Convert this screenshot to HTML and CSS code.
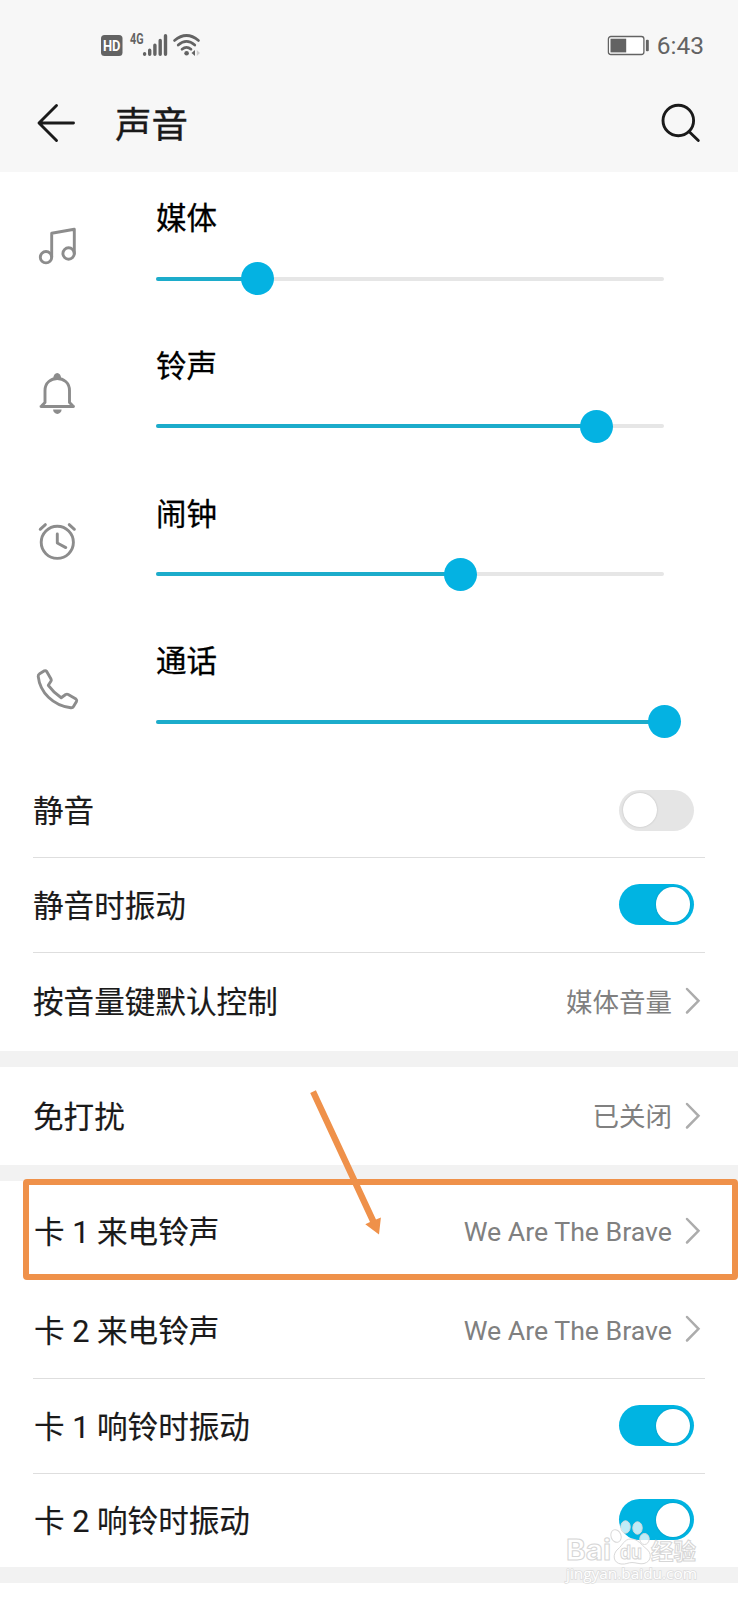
FILE: index.html
```html
<!DOCTYPE html>
<html lang="zh-CN">
<head>
<meta charset="utf-8">
<title>声音</title>
<link rel="stylesheet" href="styles.css">
</head>
<body>
<main class="screen">
  <header class="header">
    <div class="status">
      <svg class="status-icons" width="104" height="32" viewBox="0 0 104 32">
        <rect x="1" y="5" width="21.500" height="21" rx="3.500" fill="#636363"/>
        <text class="hd-label" x="3" y="20.500" textLength="17.500" lengthAdjust="spacingAndGlyphs">HD</text>
        <text class="net-label" x="30" y="14" textLength="13.500" lengthAdjust="spacingAndGlyphs">4G</text>
        <g stroke="#636363" stroke-width="3.400" stroke-linecap="round">
          <path d="M44.600 24.300v-.6M49.700 24.300v-4M54.900 24.300v-9M60.200 24.300V10.500M65.500 24.300V5.800"/>
        </g>
        <g fill="none" stroke="#636363" stroke-width="2.700" stroke-linecap="round">
          <path d="M74.500 10.500Q86.500 0.500 98.500 10.500M78.200 15Q86.500 7.800 94.800 15M82 19.200Q86.500 15.500 91 19.200"/>
        </g>
        <circle cx="86.600" cy="23.300" r="2.300" fill="#636363"/>
        <path d="M95 20v6l-3.500-3z" fill="#636363"/>
        <path d="M96.800 20v6l3.200-3z" fill="#ccc"/>
      </svg>
      <div class="status-right">
        <svg width="44" height="22" viewBox="0 0 44 22">
          <rect x="0.400" y="1.500" width="35.500" height="18" rx="2.500" fill="#fff" stroke="#636363" stroke-width="1.300"/>
          <rect x="2.500" y="3.700" width="15.700" height="13.700" fill="#636363"/>
          <rect x="37.900" y="4.700" width="2.900" height="11.500" rx="1" fill="#636363"/>
        </svg>
        <span class="time">6:43</span>
      </div>
    </div>
    <div class="titlebar">
      <svg width="40" height="40" viewBox="0 0 40 40" class="stroke-dark">
        <path d="M36.500 20H2.500M19.500 2.500L2 20l17.500 17.500"/>
      </svg>
      <h1 class="title">声音</h1>
      <svg class="search" width="42" height="42" viewBox="0 0 42 42">
        <g class="stroke-dark"><circle cx="18.300" cy="18.500" r="15.300"/><path d="M29 29.500l9.300 9"/></g>
      </svg>
    </div>
  </header>

  <section class="volumes">
    <div class="volume">
      <svg class="volume-icon" viewBox="0 0 44 44">
        <circle cx="10" cy="31.200" r="5.700"/><circle cx="32.600" cy="27.500" r="5.700"/>
        <path d="M15.700 31V7.200L38.300 3.200V27.500"/>
      </svg>
      <div class="volume-body"><span class="volume-name">媒体</span>
        <div class="track"><div class="fill" style="width:20%"></div></div></div>
    </div>
    <div class="volume">
      <svg class="volume-icon" viewBox="0 3 44 44">
        <path d="M5 35.500H37.500M6 34.500L9 31.500V19.500C9 3.500 33.500 3.500 33.500 19.500V31.500L36.500 34.500"/>
        <path class="solid" d="M17.300 7.300a3.900 5.300 0 0 1 7.800 0zM17.100 38.500h8.500a4.250 4.400 0 0 1-8.500 0z"/>
      </svg>
      <div class="volume-body"><span class="volume-name">铃声</span>
        <div class="track"><div class="fill" style="width:86.700%"></div></div></div>
    </div>
    <div class="volume">
      <svg class="volume-icon" viewBox="0 3 44 44">
        <circle cx="21.300" cy="23.300" r="16.100"/>
        <path d="M21.300 15v9l8.500 4.600M4.200 10.300l5.200-4.700M38.400 10.300l-5.200-4.700"/>
      </svg>
      <div class="volume-body"><span class="volume-name">闹钟</span>
        <div class="track"><div class="fill" style="width:60%"></div></div></div>
    </div>
    <div class="volume">
      <svg class="volume-icon" viewBox="0 1.500 44 44">
        <path d="M3.600 6.300L8.400 3.300Q9.700 2.700 10.700 4L15 11.500Q15.700 12.700 14.900 13.800L12.300 17.800Q17.500 25 25.200 30.200L29.700 27Q31 26.300 32.200 27L40 31.500Q41.200 32.500 40.500 34L37.500 39Q36.700 40.500 34.800 40.300C17 38 4 25 2.200 8.800Q2.100 7.200 3.600 6.300z"/>
      </svg>
      <div class="volume-body"><span class="volume-name">通话</span>
        <div class="track"><div class="fill" style="width:100%"></div></div></div>
    </div>
  </section>

  <section class="group">
    <div class="row"><span class="label">静音</span><span class="switch"></span></div>
    <div class="row row-vibrate"><span class="label">静音时振动</span><span class="switch on"></span></div>
    <div class="row row-link row-short"><span class="label">按音量键默认控制</span><span class="value"><span class="value-text">媒体音量</span><svg class="chevron" viewBox="0 0 16 28"><path d="M2 2l11.500 11.800L2 25.500"/></svg></span></div>
  </section>
  <section class="group">
    <div class="row row-link"><span class="label">免打扰</span><span class="value"><span class="value-text">已关闭</span><svg class="chevron" viewBox="0 0 16 28"><path d="M2 2l11.500 11.800L2 25.500"/></svg></span></div>
  </section>
  <section class="group">
    <div class="row row-link row-sim"><span class="label sim">卡 1 来电铃声</span><span class="value"><span class="value-latin">We Are The Brave</span><svg class="chevron" viewBox="0 0 16 28"><path d="M2 2l11.500 11.800L2 25.500"/></svg></span></div>
    <div class="row row-link"><span class="label sim">卡 2 来电铃声</span><span class="value"><span class="value-latin">We Are The Brave</span><svg class="chevron" viewBox="0 0 16 28"><path d="M2 2l11.500 11.800L2 25.500"/></svg></span></div>
    <div class="row"><span class="label sim">卡 1 响铃时振动</span><span class="switch on"></span></div>
    <div class="row row-last"><span class="label sim">卡 2 响铃时振动</span><span class="switch on"></span></div>
  </section>

  <div class="highlight"></div>
  <svg class="arrow" width="80" height="150" viewBox="0 0 80 150">
    <path d="M5.200 2.900L10.900 .300 71 129.500 75.900 127.500 74 144.500 60.300 134.300 65 132z" fill="#ef914a"/>
  </svg>
  <svg class="watermark" width="140" height="80" viewBox="0 0 140 80">
    <g class="paw">
      <ellipse cx="51" cy="19" rx="5" ry="6.500" transform="rotate(-20 51 19)"/>
      <ellipse cx="60.500" cy="10" rx="4.700" ry="6.200"/>
      <ellipse cx="72.500" cy="11" rx="4.700" ry="6.200"/>
      <ellipse cx="79.500" cy="22" rx="4.700" ry="5.500"/>
      <path d="M66 22c-7 0-8 6-13 10-6 5-5 14 3 15 5 .6 7-1.500 11-1.500s8 2 12 1c8-2 8-11 2-15-5-4-8-9.500-15-9.500z"/>
    </g>
    <text class="wm-text" x="1" y="43" font-size="28" textLength="45" lengthAdjust="spacingAndGlyphs">Bai</text>
    <text class="wm-text" x="55" y="42" font-size="19" textLength="22" lengthAdjust="spacingAndGlyphs">du</text>
    <text class="wm-text wm-cn" x="86" y="42" font-size="22" textLength="45" lengthAdjust="spacingAndGlyphs">经验</text>
    <text class="wm-url" x="1" y="62" textLength="131" lengthAdjust="spacingAndGlyphs">jingyan.baidu.com</text>
  </svg>
</main>
</body>
</html>
```
FILE: styles.css
```css
* { box-sizing: border-box; }
body { margin: 0; background: #fff; font-family: Roboto, "Noto Sans CJK SC", sans-serif; color: #1a1a1a; }
svg { display: block; flex: none; overflow: visible; }
.screen { position: relative; width: 738px; height: 1600px; overflow: hidden; }
.header { height: 172px; background: #f7f7f7; padding-top: 28px; }
.status { display: flex; justify-content: space-between; align-items: center; height: 36px; padding: 0 34px 0 100px; }
.status-right { display: flex; align-items: center; gap: 5px; }
.time { font-size: 24.500px; color: #636363; line-height: 36px; }
.hd-label { font: bold 15px Roboto, sans-serif; fill: #fff; }
.net-label { font: bold 14px Roboto, sans-serif; fill: #636363; }
.titlebar { display: flex; align-items: center; height: 74px; margin-top: 22px; padding: 0 36px 0 37px; }
.title { margin: 0 0 0 38px; padding-top: 5px; font-size: 36.500px; font-weight: 400; line-height: 74px; -webkit-text-stroke: .4px #1a1a1a; }
.search { margin-left: auto; }
.stroke-dark { fill: none; stroke: #1a1a1a; stroke-width: 2.900; stroke-linecap: round; stroke-linejoin: round; }
.volumes { height: 591px; display: grid; grid-template-rows: repeat(4, 147.750px); color: #000; }
.volume { display: flex; padding: 22px 74px 0 36px; }
.volume-icon { width: 44px; height: 44px; margin: 32px 76px 0 0; fill: none; stroke: #8c8c8c; stroke-width: 2.900; stroke-linecap: round; stroke-linejoin: round; }
.volume-icon .solid { fill: #8c8c8c; stroke: none; }
.volume-body { flex: 1; }
.volume-name { display: block; height: 49px; line-height: 48px; padding-top: 1px; font-size: 30.500px; -webkit-text-stroke: .3px #000; }
.track { height: 4px; margin-top: 33.700px; border-radius: 2px; background: #e6e6e6; }
.fill { display: flex; align-items: center; justify-content: flex-end; height: 4px; border-radius: 2px; background: #1caccb; }
.fill::after { content: ""; flex: none; width: 33px; height: 33px; margin-right: -16.500px; border-radius: 50%; background: #04b2e2; }
.group { padding: 0 33px; border-bottom: 16.500px solid #f2f2f2; }
.row { display: flex; align-items: center; justify-content: space-between; height: 95px; border-bottom: 1px solid #dedede; font-size: 30.600px; white-space: pre; }
.row:last-child { border-bottom: 0; }
.row-vibrate { padding-bottom: 1px; }
.row-link { height: 98.600px; }
.row-short { height: 97.500px; padding-bottom: 1px; }
.row-sim { height: 99.200px; padding-top: 1px; }
.row-last { height: 93px; padding-bottom: 1px; }
.label { padding-bottom: 2px; -webkit-text-stroke: .15px #1a1a1a; }
.sim { padding: 0 0 1px 1px; }
.switch { width: 75.500px; height: 41px; margin-right: 11px; padding: 3px 4px; border-radius: 21px; background: #e5e5e5; display: flex; align-items: center; }
.switch::before { content: ""; width: 34.500px; height: 34.500px; border-radius: 50%; background: #fff; box-shadow: 0 0 2px rgba(0,0,0,.2); }
.switch.on { background: #00b4e2; justify-content: flex-end; }
.value { display: flex; align-items: center; font-size: 26.500px; color: #808080; }
.value-text { padding-bottom: 2px; }
.value-latin { padding-top: 3px; font-size: 26.700px; }
.chevron { width: 16px; height: 28px; margin: 0 4px 0 13px; fill: none; stroke: #acacac; stroke-width: 2.500; stroke-linecap: round; }
.highlight { position: absolute; left: 23px; top: 1179px; width: 715px; height: 101px; border: 6px solid #ef914a; border-radius: 4px; }
.arrow { position: absolute; left: 305px; top: 1090px; width: 80px; height: 150px; }
.watermark { position: absolute; left: 565px; top: 1517px; }
.paw { fill: #fff; fill-opacity: .75; stroke: #d9d9d9; stroke-width: 1; }
.wm-text { font-family: Inter, sans-serif; font-weight: 700; fill: #fff; fill-opacity: .9; stroke: #d6d6d6; stroke-width: 1; }
.wm-cn { font-family: "Noto Sans CJK SC", sans-serif; font-weight: 700; }
.wm-url { font: 500 15px "Open Sans", sans-serif; fill: #fff; stroke: #dcdcdc; stroke-width: 1.500; paint-order: stroke; }
```
